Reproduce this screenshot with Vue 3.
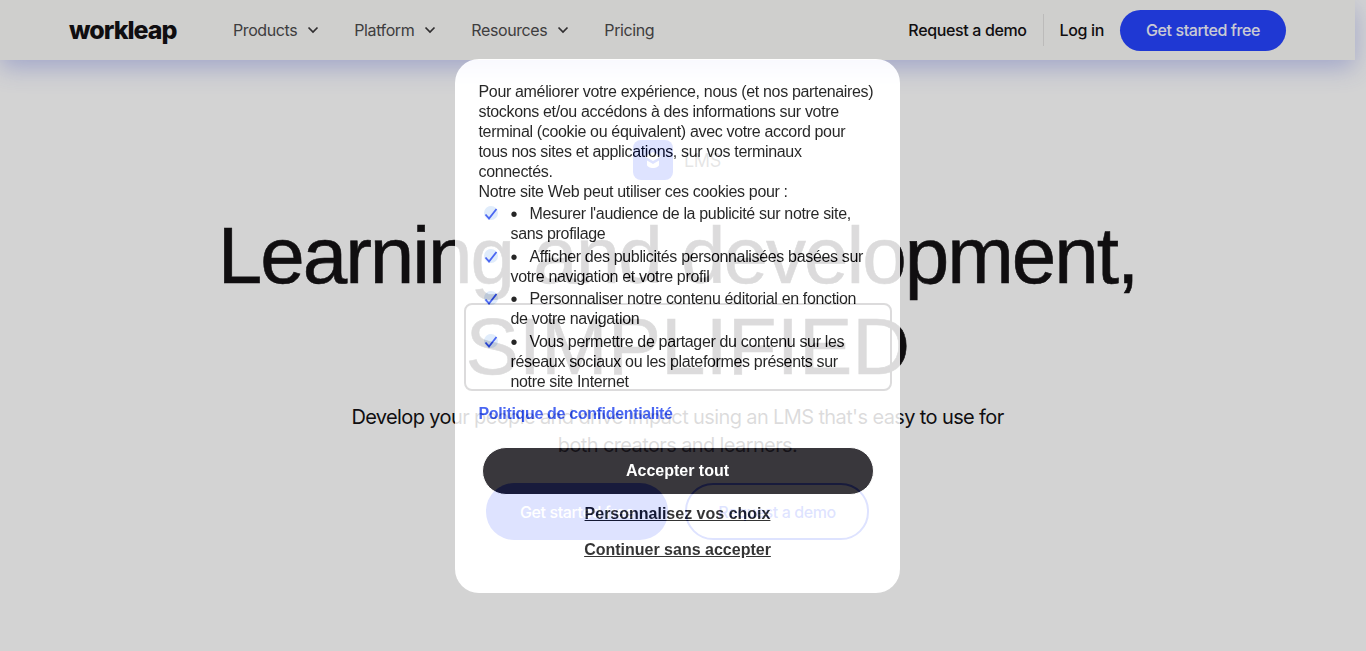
<template>
  <div class="page">
    <header class="nav">
      <div class="nav-left">
        <span class="logo">workleap</span>
        <nav class="links">
          <a v-for="item in navItems" :key="item" class="link">
            {{ item }}
            <svg class="chev" viewBox="0 0 12 8" width="12" height="8">
              <path d="M1.500 1.500 6 6l4.500-4.500" fill="none" stroke="currentColor" stroke-width="1.700" />
            </svg>
          </a>
          <a class="link">Pricing</a>
        </nav>
      </div>
      <div class="nav-right">
        <a class="demo">Request a demo</a>
        <span class="sep"></span>
        <a class="login">Log in</a>
        <a class="cta">Get started free</a>
      </div>
    </header>

    <main class="hero">
      <div class="tag">
        <span class="tag-icon">
          <svg viewBox="0 0 24 24" width="24" height="24">
            <path d="M12 4 20 8.500 12 13 4 8.500Z" fill="#fff" />
            <path d="M6 12.500 12 16l6-3.500V17c0 1.500-3 3-6 3s-6-1.500-6-3Z" fill="#fff" />
          </svg>
        </span>
        <span class="tag-label">LMS</span>
      </div>
      <h1 class="title">Learning and development,</h1>
      <div class="word">SIMPLIFIED</div>
      <p class="sub">Develop your people and drive impact using an LMS that's easy to use for both creators and learners.</p>
      <div class="actions">
        <a class="btn primary">Get started free</a>
        <a class="btn outline">Request a demo</a>
      </div>
    </main>

    <div class="modal">
      <p class="intro">
        Pour améliorer votre expérience, nous (et nos partenaires) stockons et/ou accédons à des informations sur votre terminal (cookie ou équivalent) avec votre accord pour tous nos sites et applications, sur vos terminaux connectés.<br />
        Notre site Web peut utiliser ces cookies pour :
      </p>
      <ul class="purposes">
        <li v-for="p in purposes" :key="p" class="purpose">
          <span class="check">
            <svg viewBox="0 0 14 14" width="14" height="14">
              <path d="M1.500 7.500 5 11.500 12.500 2" fill="none" stroke="#2b4cf0" stroke-width="1.800" />
            </svg>
          </span>
          <span class="purpose-text"><span class="dot">•</span>{{ p }}</span>
        </li>
      </ul>
      <a class="policy">Politique de confidentialité</a>
      <div class="choices">
        <button class="accept">Accepter tout</button>
        <a class="choice">Personnalisez vos choix</a>
        <a class="choice">Continuer sans accepter</a>
      </div>
    </div>
  </div>
</template>

<script setup>
const navItems = ["Products", "Platform", "Resources"];

const purposes = [
  "Mesurer l'audience de la publicité sur notre site, sans profilage",
  "Afficher des publicités personnalisées basées sur votre navigation et votre profil",
  "Personnaliser notre contenu éditorial en fonction de votre navigation",
  "Vous permettre de partager du contenu sur les réseaux sociaux ou les plateformes présents sur notre site Internet",
];
</script>

<style>
html,
body {
  margin: 0;
  background: #fff;
  overflow: hidden;
}
</style>

<style scoped>
.page {
  width: 1355px;
  height: 651px;
  font-family: Inter, "Liberation Sans", sans-serif;
  color: #141214;
}

/* barre du haut */
.nav {
  height: 60px;
  background: #fbfaf8;
  box-shadow: 0 8px 24px rgba(60, 80, 220, 0.3);
  display: flex;
  align-items: center;
  justify-content: space-between;
  padding: 0 69px;
  box-sizing: border-box;
}

.nav-left {
  display: flex;
  align-items: center;
}

.logo {
  font-size: 25px;
  font-weight: 800;
  letter-spacing: -1px;
  width: 164px;
  color: #141214;
}

.links {
  display: flex;
  gap: 35px;
}

.link {
  display: flex;
  align-items: center;
  gap: 10px;
  font-size: 16px;
  letter-spacing: -0.4px;
  color: #4c4b4c;
}

.chev {
  color: #3a393a;
}

.nav-right {
  display: flex;
  align-items: center;
}

.demo,
.login {
  font-size: 16px;
  font-weight: 500;
  letter-spacing: -0.36px;
  color: #141214;
}

.sep {
  width: 1px;
  height: 32px;
  background: #e4e3e1;
  margin: 0 16px;
}

.login {
  margin-right: 16px;
}

.cta {
  width: 166px;
  height: 41px;
  border-radius: 21px;
  background: #2644ff;
  color: #f5f6ff;
  font-size: 16px;
  font-weight: 500;
  letter-spacing: -0.4px;
  display: flex;
  align-items: center;
  justify-content: center;
}

/* contenu principal */
.hero {
  display: flex;
  flex-direction: column;
  align-items: center;
  padding-top: 80px;
}

.tag {
  display: flex;
  align-items: center;
  gap: 11px;
  height: 40px;
  margin-left: -1px;
}

.tag-icon {
  width: 40px;
  height: 40px;
  border-radius: 8px;
  background: #2644ff;
  display: flex;
  align-items: center;
  justify-content: center;
}

.tag-label {
  font-size: 18px;
  letter-spacing: -0.4px;
  color: #555;
}

.title {
  margin: 32px 0 0;
  font-family: "Liberation Sans", sans-serif;
  font-size: 80px;
  line-height: 88px;
  font-weight: 400;
  letter-spacing: -2px;
  white-space: nowrap;
  -webkit-text-stroke: 0.6px #141214;
}

.word {
  margin-top: 3px;
  width: 428px;
  height: 88px;
  box-sizing: border-box;
  border: 2px solid #141214;
  border-radius: 8px;
  font-family: "Liberation Sans", sans-serif;
  font-size: 80px;
  line-height: 84px;
  text-align: center;
  white-space: nowrap;
  -webkit-text-stroke: 0.6px #141214;
}

.sub {
  margin: 12px 0 0;
  width: 680px;
  font-size: 20px;
  line-height: 28px;
  letter-spacing: -0.62px;
  text-align: center;
}

.actions {
  display: flex;
  gap: 17px;
  margin-top: 24px;
}

.btn {
  height: 57px;
  box-sizing: border-box;
  border-radius: 28px;
  font-size: 16px;
  font-weight: 500;
  letter-spacing: -0.4px;
  display: flex;
  align-items: center;
  justify-content: center;
}

.primary {
  width: 182px;
  background: #2644ff;
  color: #fff;
}

.outline {
  width: 184px;
  border: 2px solid #2644ff;
  color: #2644ff;
}

/* fenetre de consentement */
.modal {
  position: fixed;
  left: 455px;
  top: 59px;
  width: 445px;
  height: 534px;
  box-sizing: border-box;
  padding: 23px 23.5px 0;
  border-radius: 24px;
  background: #fff;
  opacity: 0.85;
  box-shadow: 0 0 0 2000px rgba(0, 0, 0, 0.204);
  font-family: "Liberation Sans", Arial, sans-serif;
  color: #000;
  font-size: 16px;
  line-height: 20px;
  letter-spacing: -0.34px;
}

.intro {
  margin: 0;
}

.purposes {
  list-style: none;
  margin: 0;
  padding: 2px 0 0;
}

.purpose {
  display: flex;
  padding-bottom: 2.6px;
}

.check {
  flex: none;
  width: 14px;
  height: 14px;
  margin: 2px 13px 0 5px;
  border-radius: 50%;
  background: #dbe9fb;
}

.dot {
  display: inline-block;
  width: 19px;
  font-size: 20px;
  vertical-align: top;
}

.policy {
  display: block;
  margin-top: 10px;
  font-weight: 700;
  color: #2b4cf0;
}

.choices {
  display: flex;
  flex-direction: column;
  align-items: center;
}

.accept {
  width: 392px;
  height: 48px;
  margin: 23px 0 1px;
  border: 1px solid #fff;
  border-radius: 24px;
  background: #17151a;
  color: #fff;
  font-family: inherit;
  font-size: 16px;
  font-weight: 700;
}

.choice {
  font-weight: 700;
  letter-spacing: 0;
  text-decoration: underline;
  color: #111;
  padding: 8px 0;
}
</style>
